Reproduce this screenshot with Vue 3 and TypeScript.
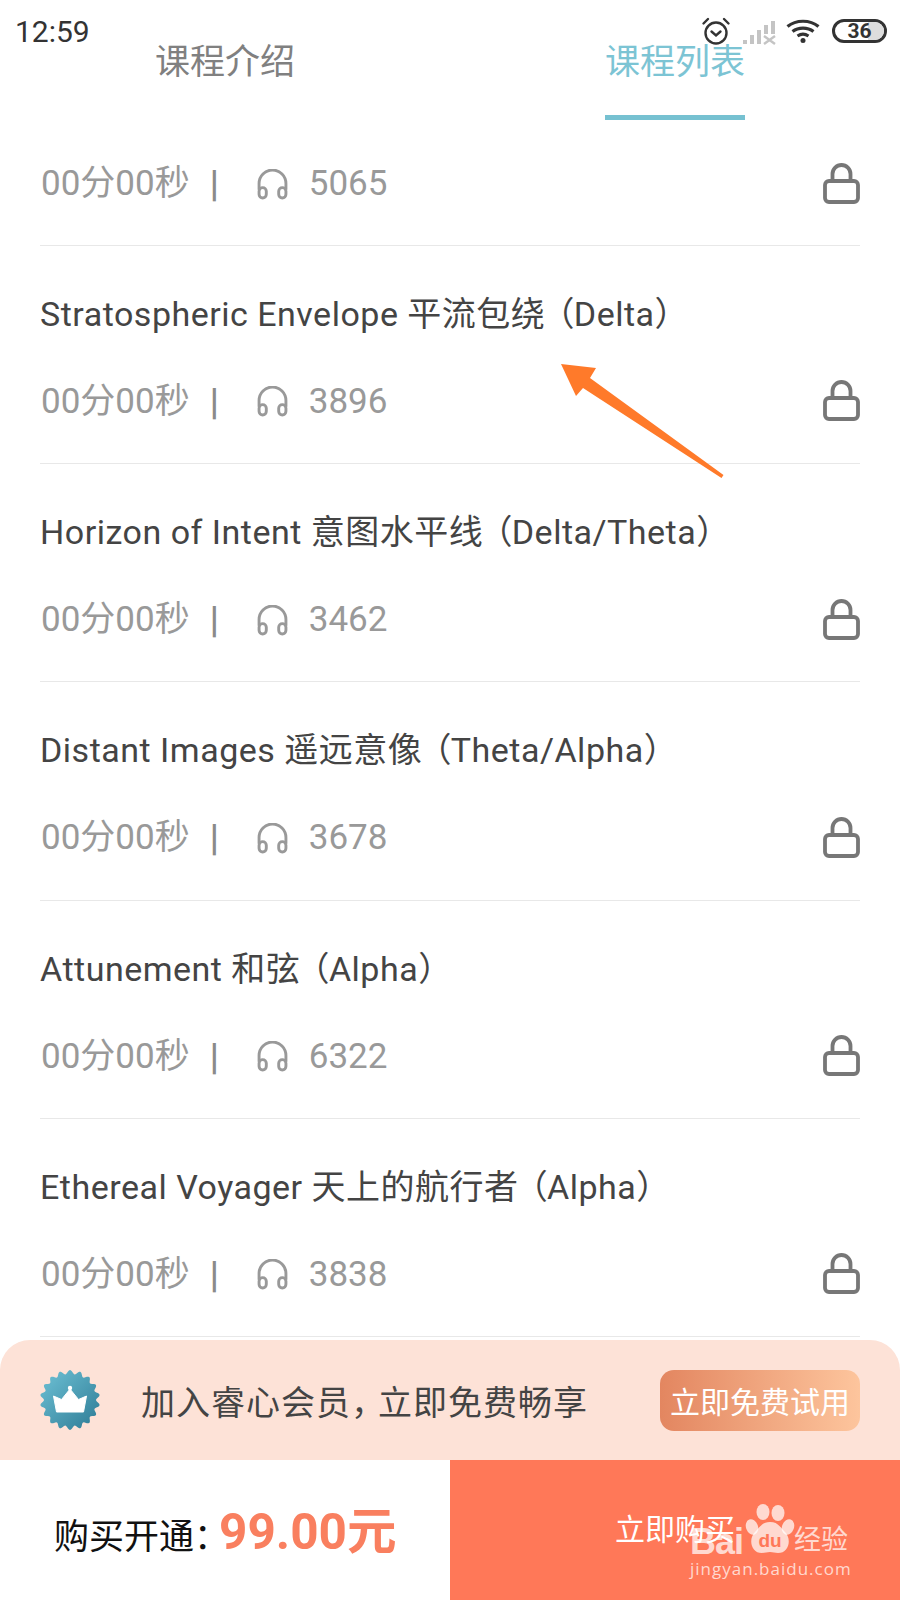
<template>
  <div class="page">
    <!-- Status bar sits over the tabs -->
    <div class="status-bar">
      <span class="time">12:59</span>
      <div class="status-icons">
        <svg class="alarm" viewBox="0 0 30 30" fill="none" stroke="#333" stroke-width="2.4">
          <circle cx="15" cy="17" r="10.5" />
          <path d="M10.5 15.5 15 19.5l4.5-4M2.5 7.5 7 3M27.5 7.5 23 3" stroke-linecap="round" />
        </svg>
        <svg class="signal" viewBox="0 0 34 24" fill="#c4c4c4">
          <rect x="1" y="19" width="4" height="4" />
          <rect x="8" y="14" width="4" height="9" />
          <rect x="15" y="9" width="4" height="14" />
          <rect x="22" y="4" width="4" height="9" />
          <rect x="29" y="0" width="4" height="13" />
          <path d="m22 15 11 8m0-8-11 8" stroke="#c4c4c4" stroke-width="2.4" />
        </svg>
        <svg class="wifi" viewBox="0 0 34 24" fill="none" stroke="#333" stroke-width="3.2">
          <path d="M1.5 7.5C10 .5 24 .5 32.5 7.5M6.5 12.5c6-4.500 15-4.500 21 0M11.500 17c3.500-2.300 7.500-2.300 11 0" />
          <circle cx="17" cy="21.500" r="2.500" fill="#333" stroke="none" />
        </svg>
        <div class="battery">
          <span class="battery-level"></span>
          <span class="battery-num">36</span>
        </div>
      </div>
    </div>

    <div class="tabs">
      <div class="tab">课程介绍</div>
      <div class="tab active">课程列表</div>
    </div>

    <div class="list">
      <div v-for="(lesson, index) in lessons" :key="index" class="row" :class="{ first: !lesson.title }">
        <div v-if="lesson.title" class="title">{{ lesson.title }}<span class="paren">（</span>{{ lesson.band }}）</div>
        <div class="meta">
          <span class="duration">00分00秒</span>
          <span class="pipe">|</span>
          <svg class="headphones" viewBox="0 0 30 30" fill="none" stroke="#999" stroke-width="2.800">
            <path d="M2 20v-6a13 13 0 0 1 26 0v6" />
            <rect x="2" y="18" width="7" height="10" rx="3.500" />
            <rect x="21" y="18" width="7" height="10" rx="3.500" />
          </svg>
          <span class="count">{{ lesson.count }}</span>
          <svg class="lock" viewBox="0 0 37 41" fill="none" stroke="#777" stroke-width="3.800">
            <rect x="2" y="18" width="33" height="21" rx="4" />
            <path d="M9.500 18V11a9 9 0 0 1 18 0v7" />
          </svg>
        </div>
      </div>
    </div>

    <div class="member-banner">
      <svg class="badge" viewBox="0 0 60 60">
        <defs>
          <linearGradient id="badgeFill" x1="0" y1="0" x2="1" y2="1">
            <stop offset="0" stop-color="#6fc2d6" />
            <stop offset="1" stop-color="#2c7a94" />
          </linearGradient>
        </defs>
        <path :d="badgePath" fill="url(#badgeFill)" />
        <circle cx="30" cy="18" r="2.200" fill="#fff" />
        <path d="M13.500 26 21.500 29.500 30 19 38.500 29.500l8-3.500L43.500 42h-27z" fill="#fff" stroke="#fff" stroke-width="1" stroke-linejoin="round" />
      </svg>
      <span class="banner-text">加入睿心会员<span class="comma">，</span>立即免费畅享</span>
      <div class="trial-btn">立即免费试用</div>
    </div>

    <div class="buy-bar">
      <div class="price-side">
        <span class="price-label">购买开通：</span>
        <span class="price">99.00元</span>
      </div>
      <div class="buy-btn">立即购买</div>
    </div>

    <!-- Annotation arrow -->
    <svg class="arrow" viewBox="0 0 900 1600">
      <polygon points="561,364 596,368 590,378 723.500,475 721.500,478 583,388 576,396" fill="#ff7a2a" />
    </svg>

    <!-- Watermark -->
    <div class="watermark">
      <div class="wm-top">
        <span class="wm-bai">Bai</span>
        <svg class="wm-paw" viewBox="0 0 50 52">
          <ellipse cx="18" cy="9" rx="6.500" ry="8" />
          <ellipse cx="33" cy="10" rx="6.500" ry="8" />
          <ellipse cx="7" cy="24" rx="6" ry="8" transform="rotate(-20 7 24)" />
          <ellipse cx="43" cy="24" rx="6" ry="8" transform="rotate(20 43 24)" />
          <path d="M25 19c8 0 10 5 15 10 7 7 4 21-7 21-3 0-5-1-8-1s-5 1-8 1c-11 0-14-14-7-21 5-5 7-10 15-10z" />
          <text x="25" y="44" text-anchor="middle" class="wm-du">du</text>
        </svg>
        <span class="wm-cn">经验</span>
      </div>
      <div class="wm-url">jingyan.baidu.com</div>
    </div>
  </div>
</template>

<script setup lang="ts">
interface Lesson {
  title: string;
  band: string;
  count: number;
}

const lessons: Lesson[] = [
  { title: '', band: '', count: 5065 },
  { title: 'Stratospheric Envelope 平流包绕', band: 'Delta', count: 3896 },
  { title: 'Horizon of Intent 意图水平线', band: 'Delta/Theta', count: 3462 },
  { title: 'Distant Images 遥远意像', band: 'Theta/Alpha', count: 3678 },
  { title: 'Attunement 和弦', band: 'Alpha', count: 6322 },
  { title: 'Ethereal Voyager 天上的航行者', band: 'Alpha', count: 3838 },
];

// Scalloped edge of the crown badge
const badgePath = (() => {
  const points: string[] = [];
  for (let i = 0; i < 180; i++) {
    const a = (i / 180) * Math.PI * 2;
    const r = 28 + 2 * Math.cos(a * 18);
    points.push(`${(30 + r * Math.sin(a)).toFixed(2)} ${(30 - r * Math.cos(a)).toFixed(2)}`);
  }
  return `M${points.join('L')}Z`;
})();
</script>

<style scoped>
.page {
  position: relative;
  width: 900px;
  height: 1600px;
  overflow: hidden;
  display: flex;
  flex-direction: column;
  background: #fff;
  font-family: Roboto, "Noto Sans CJK SC", sans-serif;
}

.status-bar {
  position: absolute;
  top: 0;
  left: 0;
  right: 0;
  height: 60px;
  z-index: 2;
}

.time {
  position: absolute;
  left: 15px;
  top: 15px;
  font-size: 30px;
  line-height: 34px;
  color: #333;
}

.status-icons {
  position: absolute;
  top: 16px;
  right: 13px;
  display: flex;
  align-items: center;
}

.alarm {
  width: 30px;
  height: 30px;
  margin-right: 11px;
}

.signal {
  width: 34px;
  height: 24px;
  margin-right: 10px;
  margin-top: 4px;
}

.wifi {
  width: 34px;
  height: 24px;
  margin-right: 12px;
}

.battery {
  position: relative;
  width: 55px;
  height: 24px;
  box-sizing: border-box;
  border: 3px solid #333;
  border-radius: 12px;
  overflow: hidden;
  display: flex;
  align-items: center;
  justify-content: center;
}

.battery-level {
  position: absolute;
  top: 0;
  bottom: 0;
  right: 0;
  width: 16px;
  background: #ddd;
}

.battery-num {
  position: relative;
  font-size: 21px;
  font-weight: 700;
  line-height: 1;
  color: #333;
}

.tabs {
  display: flex;
  height: 120px;
  flex-shrink: 0;
  box-sizing: border-box;
  padding: 0 155px;
  justify-content: space-between;
}

.tab {
  height: 120px;
  box-sizing: border-box;
  padding-top: 38px;
  font-size: 35px;
  line-height: 50px;
  color: #808080;
}

.tab.active {
  color: #7cc4d4;
  border-bottom: 5px solid #76c1d1;
}

.list {
  flex: 1;
  min-height: 0;
  padding: 0 40px;
  overflow: hidden;
}

.row {
  height: 218.3px;
  box-sizing: border-box;
  border-bottom: 1px solid #e8e8e8;
  padding-top: 43px;
}

.row.first {
  height: 125.800px;
  padding-top: 39px;
}

.title {
  font-size: 34px;
  letter-spacing: 0.5px;
  line-height: 50px;
  color: #444;
  white-space: nowrap;
}

/* proportional glyph, the full-width bracket is too wide here */
.paren {
  margin-left: 11px;
  font-feature-settings: "palt";
}

.meta {
  display: flex;
  align-items: center;
  height: 50px;
  margin-top: 38px;
  font-size: 35px;
  line-height: 50px;
  color: #999;
}

.row.first .meta {
  margin-top: 0;
}

.duration {
  margin-left: 1px;
}

.pipe {
  margin-left: 20px;
  color: #8a8a8a;
  font-size: 36px;
  font-weight: 700;
}

.headphones {
  width: 31px;
  height: 31px;
  margin-left: 38px;
}

.count {
  margin-left: 21px;
}

.lock {
  width: 37px;
  height: 41px;
  margin-left: auto;
  margin-top: -2px;
}

.member-banner {
  height: 120px;
  flex-shrink: 0;
  box-sizing: border-box;
  padding: 0 40px;
  display: flex;
  align-items: center;
  background: #fde2d7;
  border-radius: 30px 30px 0 0;
}

.badge {
  width: 60px;
  height: 60px;
}

.banner-text {
  margin-left: 41px;
  font-size: 34px;
  letter-spacing: 1px;
  color: #444;
  white-space: nowrap;
}

.comma {
  letter-spacing: -15px;
  margin-right: 8px;
}

.trial-btn {
  margin-left: auto;
  width: 200px;
  height: 61px;
  border-radius: 14px;
  display: flex;
  align-items: center;
  justify-content: center;
  font-size: 30px;
  color: #fff;
  background: linear-gradient(90deg, #e38660, #fdc59d);
}

.buy-bar {
  height: 140px;
  flex-shrink: 0;
  display: flex;
}

.price-side {
  width: 450px;
  box-sizing: border-box;
  padding-left: 54px;
  display: flex;
  align-items: center;
  background: #fff;
}

.price-label {
  margin-top: 6px;
  font-size: 35px;
  color: #111;
  white-space: nowrap;
}

.price {
  margin-left: -10px;
  margin-bottom: 6px;
  font-size: 49.5px;
  font-weight: 700;
  color: #f97f5f;
  white-space: nowrap;
}

.buy-btn {
  flex: 1;
  box-sizing: border-box;
  padding: 0 0 6px 165px;
  display: flex;
  align-items: center;
  font-size: 30px;
  color: #fff;
  background: #ff7858;
}

.arrow {
  position: absolute;
  inset: 0;
  width: 900px;
  height: 1600px;
  pointer-events: none;
}

.watermark {
  position: absolute;
  left: 690px;
  top: 1503px;
  width: 180px;
  color: rgba(255, 255, 255, 0.72);
  pointer-events: none;
}

.wm-top {
  display: flex;
  align-items: flex-end;
  height: 52px;
}

.wm-bai {
  font-family: "Liberation Sans", sans-serif;
  font-size: 36px;
  font-weight: 700;
  line-height: 26px;
  letter-spacing: -1px;
}

.wm-paw {
  width: 50px;
  height: 52px;
  margin-left: 2px;
  fill: rgba(255, 255, 255, 0.72);
}

.wm-du {
  font-family: "Liberation Sans", sans-serif;
  font-size: 19px;
  font-weight: 700;
  fill: #ff7858;
}

.wm-cn {
  margin-left: -1px;
  font-size: 27px;
  line-height: 30px;
}

.wm-url {
  margin-top: 3px;
  font-family: "Open Sans", sans-serif;
  font-size: 17px;
  line-height: 22px;
  letter-spacing: 1px;
  white-space: nowrap;
}
</style>
